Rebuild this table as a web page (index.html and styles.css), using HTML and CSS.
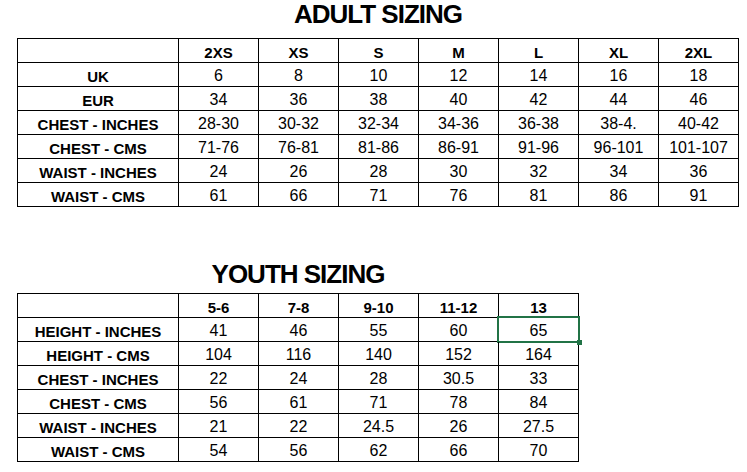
FILE: index.html
```html
<!DOCTYPE html>
<html lang="en">
<head>
<meta charset="utf-8">
<title>Sizing</title>
<link rel="stylesheet" href="styles.css">
</head>
<body>
<section class="chart chart-adult">
  <h1 class="title title-adult">ADULT SIZING</h1>
  <div class="grid grid-adult">
    <div class="cell"></div><div class="cell head">2XS</div><div class="cell head">XS</div><div class="cell head">S</div><div class="cell head">M</div><div class="cell head">L</div><div class="cell head">XL</div><div class="cell head">2XL</div>
    <div class="cell label">UK</div><div class="cell">6</div><div class="cell">8</div><div class="cell">10</div><div class="cell">12</div><div class="cell">14</div><div class="cell">16</div><div class="cell">18</div>
    <div class="cell label">EUR</div><div class="cell">34</div><div class="cell">36</div><div class="cell">38</div><div class="cell">40</div><div class="cell">42</div><div class="cell">44</div><div class="cell">46</div>
    <div class="cell label">CHEST - INCHES</div><div class="cell">28-30</div><div class="cell">30-32</div><div class="cell">32-34</div><div class="cell">34-36</div><div class="cell">36-38</div><div class="cell">38-4.</div><div class="cell">40-42</div>
    <div class="cell label">CHEST - CMS</div><div class="cell">71-76</div><div class="cell">76-81</div><div class="cell">81-86</div><div class="cell">86-91</div><div class="cell">91-96</div><div class="cell">96-101</div><div class="cell">101-107</div>
    <div class="cell label">WAIST - INCHES</div><div class="cell">24</div><div class="cell">26</div><div class="cell">28</div><div class="cell">30</div><div class="cell">32</div><div class="cell">34</div><div class="cell">36</div>
    <div class="cell label">WAIST - CMS</div><div class="cell">61</div><div class="cell">66</div><div class="cell">71</div><div class="cell">76</div><div class="cell">81</div><div class="cell">86</div><div class="cell">91</div>
  </div>
</section>
<section class="chart chart-youth">
  <h1 class="title title-youth">YOUTH SIZING</h1>
  <div class="grid grid-youth">
    <div class="cell"></div><div class="cell head">5-6</div><div class="cell head">7-8</div><div class="cell head">9-10</div><div class="cell head">11-12</div><div class="cell head">13</div>
    <div class="cell label">HEIGHT - INCHES</div><div class="cell">41</div><div class="cell">46</div><div class="cell">55</div><div class="cell">60</div><div class="cell selected">65<span class="handle"></span></div>
    <div class="cell label">HEIGHT - CMS</div><div class="cell">104</div><div class="cell">116</div><div class="cell">140</div><div class="cell">152</div><div class="cell">164</div>
    <div class="cell label">CHEST - INCHES</div><div class="cell">22</div><div class="cell">24</div><div class="cell">28</div><div class="cell">30.5</div><div class="cell">33</div>
    <div class="cell label">CHEST - CMS</div><div class="cell">56</div><div class="cell">61</div><div class="cell">71</div><div class="cell">78</div><div class="cell">84</div>
    <div class="cell label">WAIST - INCHES</div><div class="cell">21</div><div class="cell">22</div><div class="cell">24.5</div><div class="cell">26</div><div class="cell">27.5</div>
    <div class="cell label">WAIST - CMS</div><div class="cell">54</div><div class="cell">56</div><div class="cell">62</div><div class="cell">66</div><div class="cell">70</div>
  </div>
</section>
</body>
</html>
```

FILE: styles.css
```css
html, body {
  margin: 0;
  padding: 0;
  background: #ffffff;
}

body {
  width: 747px;
  height: 472px;
  overflow: hidden;
  font-family: "Liberation Sans", Arial, sans-serif;
  color: #000000;
}

.chart {
  display: flex;
  flex-direction: column;
  align-items: flex-start;
  padding-left: 17px;
}

.chart-youth {
  margin-top: 53px;
}

.title {
  margin: 0;
  font-size: 26px;
  line-height: 28px;
  font-weight: 700;
  letter-spacing: -1px;
  text-align: center;
  align-self: stretch;
}

.title-adult {
  width: 722px;
  margin-bottom: 10px;
}

.title-youth {
  width: 562px;
  margin-bottom: 5px;
}

.grid {
  display: grid;
  grid-auto-rows: 24px;
  border-left: 1px solid #000;
  border-top: 1px solid #000;
}

.grid-adult {
  grid-template-columns: 161px repeat(7, 80px);
}

.grid-youth {
  grid-template-columns: 161px repeat(5, 80px);
}

.cell {
  box-sizing: border-box;
  border-right: 1px solid #000;
  border-bottom: 1px solid #000;
  display: flex;
  align-items: center;
  justify-content: center;
  padding-top: 3px;
  font-size: 16px;
  white-space: nowrap;
  position: relative;
}

.head,
.label {
  font-weight: 700;
  font-size: 15px;
}

.selected::after {
  content: "";
  position: absolute;
  left: -2px;
  top: -2px;
  right: -2px;
  bottom: -2px;
  border: 2px solid #217346;
  pointer-events: none;
}

.handle {
  position: absolute;
  right: -4px;
  bottom: -4px;
  width: 5px;
  height: 5px;
  background: #217346;
  z-index: 2;
}
```
